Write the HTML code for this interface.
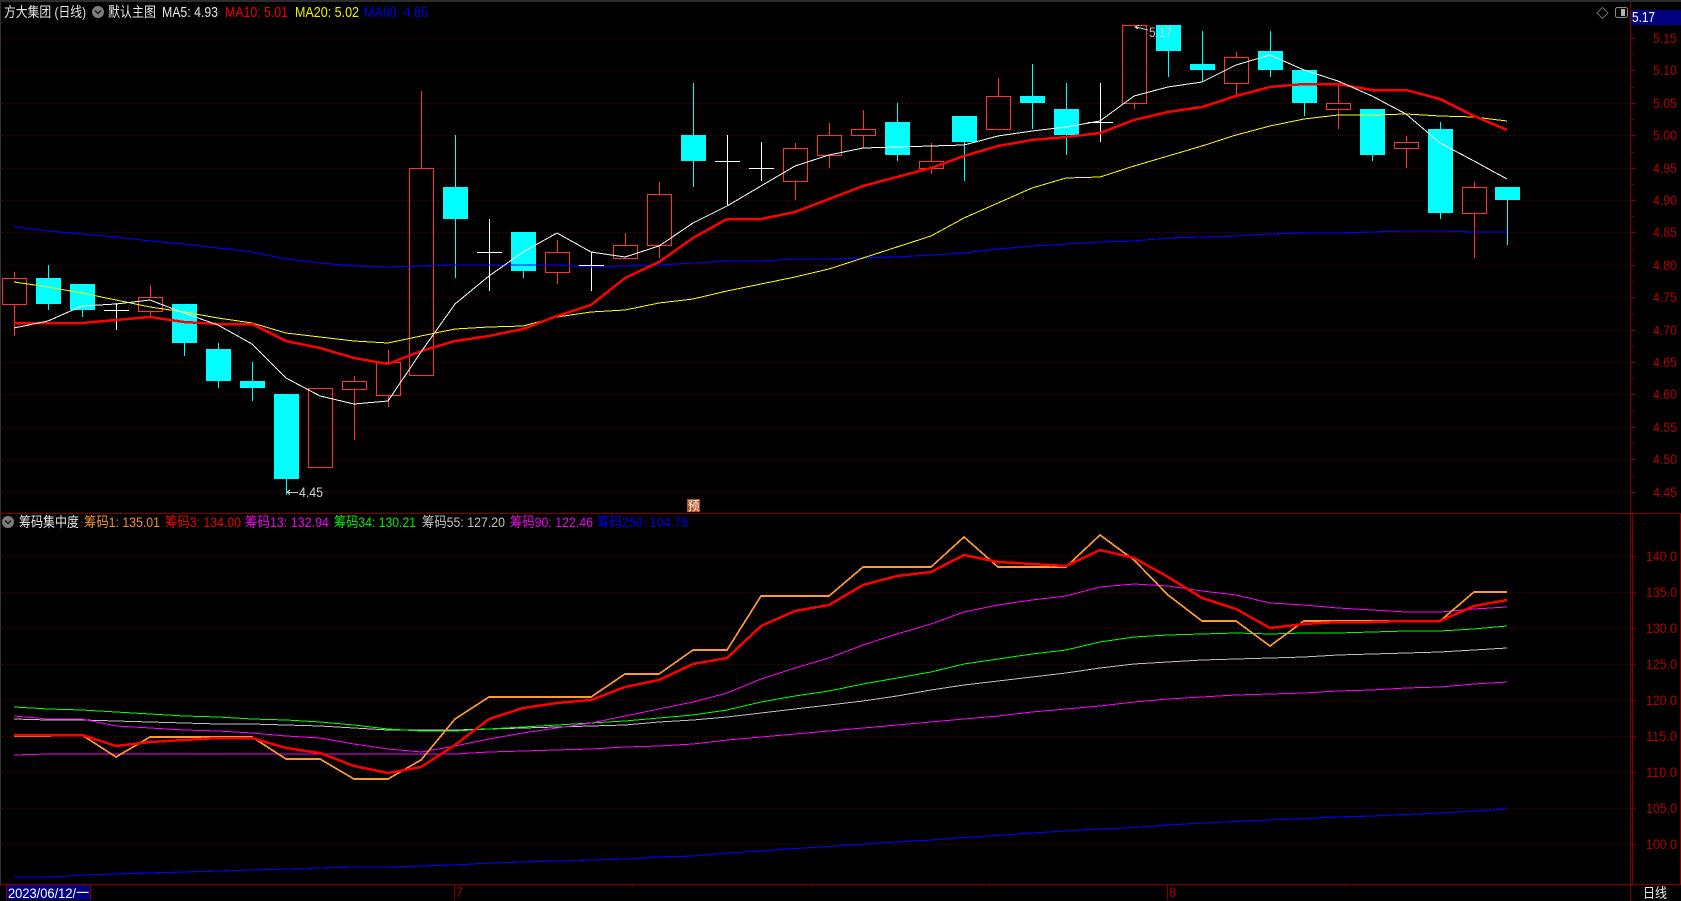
<!DOCTYPE html>
<html lang="zh-CN"><head><meta charset="utf-8"><title>方大集团 (日线)</title>
<style>html,body{margin:0;padding:0;background:#000;width:1681px;height:901px;overflow:hidden}svg{display:block}text{font-family:"Liberation Sans","Noto Sans CJK SC",sans-serif;font-size:14px}</style></head>
<body>
<svg width="1681" height="901" viewBox="0 0 1681 901" xmlns="http://www.w3.org/2000/svg">
<rect width="1681" height="901" fill="#000"/>
<rect width="1681" height="2" fill="#2d2d2d"/>
<rect width="1" height="884" fill="#333"/>
<g stroke="#7a0000" stroke-dasharray="1 3" shape-rendering="crispEdges" fill="none">
<path d="M2 38.5H1630M2 70.5H1630M2 103.5H1630M2 135.5H1630M2 168.5H1630M2 200.5H1630M2 232.5H1630M2 265.5H1630M2 297.5H1630M2 330.5H1630M2 362.5H1630M2 394.5H1630M2 427.5H1630M2 459.5H1630M2 492.5H1630"/>
<path d="M2 556.5H1630M2 592.5H1630M2 628.5H1630M2 664.5H1630M2 700.5H1630M2 736.5H1630M2 772.5H1630M2 808.5H1630M2 844.5H1630"/>
</g>
<!-- candles -->
<g shape-rendering="crispEdges">
<path fill="none" stroke="#ff3232" d="M14.5 272V278M14.5 304V336M2.5 278.5h24v26h-24zM150.5 285V297M150.5 311V316M138.5 297.5h24v14h-24zM308.5 388.5h24v79h-24zM354.5 376V381M354.5 389V440M342.5 381.5h24v8h-24zM388.5 350V362M388.5 395V407M376.5 362.5h24v33h-24zM421.5 91V168M409.5 168.5h24v207h-24zM557.5 240V252M557.5 272V284M545.5 252.5h24v20h-24zM625.5 233V245M613.5 245.5h24v13h-24zM659.5 182V194M659.5 245V258M647.5 194.5h24v51h-24zM795.5 143V148M795.5 181V200M783.5 148.5h24v33h-24zM829.5 123V135M829.5 155V168M817.5 135.5h24v20h-24zM863.5 110V129M863.5 135V148M851.5 129.5h24v6h-24zM931.5 143V161M931.5 168V174M919.5 161.5h24v7h-24zM998.5 78V96M986.5 96.5h24v33h-24zM1134.5 103V109M1122.5 25.5h24v78h-24zM1236.5 52V57M1236.5 83V96M1224.5 57.5h24v26h-24zM1338.5 83V103M1338.5 109V129M1326.5 103.5h24v6h-24zM1406.5 136V142M1406.5 148V168M1394.5 142.5h24v6h-24zM1474.5 182V187M1474.5 213V258M1462.5 187.5h24v26h-24z"/>
<path fill="none" stroke="#00ffff" d="M48.5 265V310M82.5 284V317M184.5 304V356M218.5 343V388M252.5 362V401M286.5 394V495M455.5 135V278M523.5 232V278M693.5 83V187M897.5 103V161M964.5 116V181M1032.5 64V129M1066.5 83V155M1168.5 25V77M1202.5 31V82M1270.5 31V77M1304.5 70V116M1372.5 109V161M1440.5 122V219M1507.5 187V245"/>
<path fill="#00ffff" d="M36 278h25v26h-25zM70 284h25v26h-25zM172 304h25v39h-25zM206 349h25v32h-25zM240 381h25v7h-25zM274 394h25v85h-25zM443 187h25v32h-25zM511 232h25v39h-25zM681 135h25v26h-25zM885 122h25v33h-25zM952 116h25v26h-25zM1020 96h25v7h-25zM1054 109h25v26h-25zM1156 25h25v26h-25zM1190 64h25v6h-25zM1258 51h25v19h-25zM1292 70h25v33h-25zM1360 109h25v46h-25zM1428 129h25v84h-25zM1495 187h25v13h-25z"/>
<path fill="none" stroke="#fff" d="M116.5 303V330M104 310.5H129M489.5 219V291M477 252.5H502M591.5 252V291M579 265.5H604M727.5 135V205M715 161.5H740M761.5 142V181M749 168.5H774M1100.5 83V142M1088 122.5H1113"/>
</g>
<!-- MA lines -->
<g fill="none" shape-rendering="crispEdges" stroke-linejoin="round">
<polyline stroke="#0000ff" stroke-width="1.1" points="14,227 48,231 82,234 116,237 150,241 184,244 218,248 252,252 286,259 320,263 354,266 388,267 421,266 455,265 489,265 523,265 557,265 591,267 625,266 659,265 693,263 727,261 761,261 795,259 829,259 863,258 897,257 931,255 964,253 998,249 1032,246 1066,244 1100,242 1134,241 1168,238 1202,237 1236,236 1270,234 1304,233 1338,233 1372,232 1406,231 1440,231 1474,232 1507,232"/>
<polyline stroke="#ffff00" stroke-width="1" points="14,282 48,287 82,293 116,300 150,307 184,312 218,318 252,323 286,333 320,337 354,341 388,343 421,336 455,329 489,327 523,326 557,317 591,312 625,310 659,303 693,299 727,291 761,284 795,277 829,269 863,258 897,247 931,236 964,218 998,203 1032,188 1066,178 1100,177 1134,166 1168,156 1202,146 1236,135 1270,126 1304,119 1338,115 1372,115 1406,114 1440,116 1474,117 1507,121"/>
<polyline stroke="#ff0000" stroke-width="2.5" points="14,323 48,323 82,323 116,320 150,317 184,322 218,324 252,324 286,341 320,348 354,358 388,364 421,351 455,341 489,336 523,329 557,316 591,305 625,278 659,262 693,238 727,219 761,219 795,212 829,199 863,186 897,177 931,168 964,156 998,146 1032,140 1066,137 1100,133 1134,120 1168,112 1202,107 1236,96 1270,87 1304,84 1338,84 1372,90 1406,90 1440,99 1474,116 1507,130"/>
<polyline stroke="#ffffff" stroke-width="1" points="14,328 48,321 82,306 116,304 150,300 184,313 218,325 252,344 286,378 320,396 354,404 388,401 421,352 455,304 489,276 523,252 557,233 591,252 625,257 659,246 693,223 727,206 761,186 795,166 829,155 863,148 897,147 931,146 964,145 998,136 1032,131 1066,127 1100,121 1134,96 1168,87 1202,82 1236,65 1270,55 1304,70 1338,81 1372,96 1406,114 1440,143 1474,161 1507,179"/>
<!-- indicator lines -->
<polyline stroke="#0000ff" stroke-width="1.1" points="14,877 48,877 82,875 116,874 150,873 184,872 218,871 252,870 286,869 320,868 354,867 388,867 421,866 455,865 489,863 523,862 557,861 591,860 625,859 659,857 693,856 727,853 761,851 795,848.5 829,846.5 863,844 897,842 931,840 964,837.5 998,835.5 1032,833 1066,831 1100,829 1134,827.5 1168,825 1202,823 1236,821.5 1270,820 1304,818.5 1338,817 1372,816 1406,814.5 1440,813 1474,811 1507,809"/>
<polyline stroke="#ff00ff" stroke-width="1" points="14,755 48,754 82,754 116,754 150,754 184,754 218,754 252,754 286,754 320,754 354,754 388,754 421,754 455,754 489,752 523,751 557,750 591,749 625,747 659,746 693,744 727,740 761,737 795,734 829,731 863,728 897,725 931,722 964,719 998,716 1032,712 1066,709 1100,706 1134,702 1168,699 1202,697 1236,695 1270,694 1304,693 1338,691 1372,690 1406,688 1440,687 1474,684 1507,682"/>
<polyline stroke="#c0c0c0" stroke-width="1" points="14,719 48,720 82,720 116,721 150,722 184,723 218,724 252,724 286,725 320,726 354,728 388,730 421,730 455,730 489,729 523,728 557,727 591,726 625,725 659,722 693,720 727,717 761,713 795,709 829,705 863,701 897,696 931,690 964,685 998,681 1032,677 1066,673 1100,668 1134,664 1168,662 1202,660 1236,659 1270,658 1304,657 1338,655 1372,654 1406,653 1440,652 1474,650 1507,648"/>
<polyline stroke="#00ff00" stroke-width="1" points="14,707 48,709 82,710 116,712 150,714 184,716 218,717 252,719 286,720 320,722 354,725 388,729 421,731 455,731 489,729 523,727 557,725 591,723 625,721 659,718 693,715 727,710 761,702 795,696 829,691 863,684 897,678 931,672 964,664 998,659 1032,654 1066,650 1100,642 1134,637 1168,635 1202,634 1236,633 1270,634 1304,633 1338,633 1372,632 1406,631 1440,631 1474,629 1507,626"/>
<polyline stroke="#ff00ff" stroke-width="1" points="14,716 48,719 82,719 116,726 150,728 184,730 218,731 252,733 286,736 320,738 354,744 388,749 421,752 455,746 489,739 523,733 557,728 591,723 625,716 659,709 693,702 727,693 761,679 795,668 829,658 863,645 897,634 931,624 964,612 998,605 1032,600 1066,596 1100,587 1134,584 1168,586 1202,591 1236,595 1270,603 1304,605 1338,608 1372,610 1406,612 1440,612 1474,609 1507,607"/>
<polyline stroke="#ff9933" stroke-width="1.7" points="14,736 48,736 82,735 116,757 150,737 184,737 218,737 252,737 286,759 320,759 354,779 388,779 421,760 455,719 489,697 523,697 557,697 591,697 625,674 659,674 693,650 727,650 761,596 795,596 829,596 863,567 897,567 931,567 964,537 998,567 1032,567 1066,567 1100,535 1134,560 1168,595 1202,621 1236,621 1270,646 1304,621 1338,621 1372,621 1406,621 1440,621 1474,592 1507,592"/>
<polyline stroke="#ff0000" stroke-width="2.5" points="14,735 48,735 82,735 116,746 150,742 184,740 218,738 252,738 286,748 320,753 354,766 388,773 421,767 455,745 489,719 523,708 557,703 591,700 625,687 659,680 693,664 727,658 761,626 795,611 829,605 863,585 897,576 931,572 964,555 998,562 1032,564 1066,566 1100,550 1134,558 1168,577 1202,598 1236,609 1270,628 1304,624 1338,622 1372,622 1406,621 1440,621 1474,606 1507,600"/>
</g>
<!-- high / low marks -->
<g fill="none" stroke="#c8c8c8" shape-rendering="crispEdges">
<path d="M1148 30L1136 27M1139 25L1135 27L1138 29"/>
<path d="M298 492.5H287M290 490L287 492L290 495"/>
</g>
<text x="1149" y="37" fill="#c8c8c8" textLength="23" lengthAdjust="spacingAndGlyphs">5.17</text>
<text x="299" y="497" fill="#c8d0d8" textLength="24" lengthAdjust="spacingAndGlyphs">4.45</text>
<!-- frame / axes -->
<g stroke="#800000" fill="none" shape-rendering="crispEdges">
<path d="M1630.5 2V901M0 513.5H1681M0 884.5H1681"/>
<rect x="1632.5" y="513.5" width="48" height="371"/>
<path d="M1631 38.5h5M1631 54.5h3M1631 70.5h5M1631 87.5h3M1631 103.5h5M1631 119.5h3M1631 135.5h5M1631 152.5h3M1631 168.5h5M1631 184.5h3M1631 200.5h5M1631 216.5h3M1631 232.5h5M1631 249.5h3M1631 265.5h5M1631 281.5h3M1631 297.5h5M1631 314.5h3M1631 330.5h5M1631 346.5h3M1631 362.5h5M1631 378.5h3M1631 394.5h5M1631 411.5h3M1631 427.5h5M1631 443.5h3M1631 459.5h5M1631 476.5h3M1631 492.5h5"/>
<path d="M1631 538.5h2M1631 556.5h5M1631 574.5h2M1631 592.5h5M1631 610.5h2M1631 628.5h5M1631 646.5h2M1631 664.5h5M1631 682.5h2M1631 700.5h5M1631 718.5h2M1631 736.5h5M1631 754.5h2M1631 772.5h5M1631 790.5h2M1631 808.5h5M1631 826.5h2M1631 844.5h5M1631 862.5h2"/>
<path d="M454.5 884V900M1167.5 884V900M632.5 884V887M811.5 884V887M989.5 884V887M1345.5 884V887"/>
</g>
<!-- price labels -->
<g fill="#b00000" style="font-size:15px">
<text x="1653" y="43" textLength="24" lengthAdjust="spacingAndGlyphs">5.15</text>
<text x="1653" y="75" textLength="24" lengthAdjust="spacingAndGlyphs">5.10</text>
<text x="1653" y="108" textLength="24" lengthAdjust="spacingAndGlyphs">5.05</text>
<text x="1653" y="140" textLength="24" lengthAdjust="spacingAndGlyphs">5.00</text>
<text x="1653" y="173" textLength="24" lengthAdjust="spacingAndGlyphs">4.95</text>
<text x="1653" y="205" textLength="24" lengthAdjust="spacingAndGlyphs">4.90</text>
<text x="1653" y="237" textLength="24" lengthAdjust="spacingAndGlyphs">4.85</text>
<text x="1653" y="270" textLength="24" lengthAdjust="spacingAndGlyphs">4.80</text>
<text x="1653" y="302" textLength="24" lengthAdjust="spacingAndGlyphs">4.75</text>
<text x="1653" y="335" textLength="24" lengthAdjust="spacingAndGlyphs">4.70</text>
<text x="1653" y="367" textLength="24" lengthAdjust="spacingAndGlyphs">4.65</text>
<text x="1653" y="399" textLength="24" lengthAdjust="spacingAndGlyphs">4.60</text>
<text x="1653" y="432" textLength="24" lengthAdjust="spacingAndGlyphs">4.55</text>
<text x="1653" y="464" textLength="24" lengthAdjust="spacingAndGlyphs">4.50</text>
<text x="1653" y="497" textLength="24" lengthAdjust="spacingAndGlyphs">4.45</text>
<text x="1646" y="561" textLength="31" lengthAdjust="spacingAndGlyphs">140.0</text>
<text x="1646" y="597" textLength="31" lengthAdjust="spacingAndGlyphs">135.0</text>
<text x="1646" y="633" textLength="31" lengthAdjust="spacingAndGlyphs">130.0</text>
<text x="1646" y="669" textLength="31" lengthAdjust="spacingAndGlyphs">125.0</text>
<text x="1646" y="705" textLength="31" lengthAdjust="spacingAndGlyphs">120.0</text>
<text x="1646" y="741" textLength="31" lengthAdjust="spacingAndGlyphs">115.0</text>
<text x="1646" y="777" textLength="31" lengthAdjust="spacingAndGlyphs">110.0</text>
<text x="1646" y="813" textLength="31" lengthAdjust="spacingAndGlyphs">105.0</text>
<text x="1646" y="849" textLength="31" lengthAdjust="spacingAndGlyphs">100.0</text>
<text x="456" y="897" textLength="7" lengthAdjust="spacingAndGlyphs">7</text>
<text x="1169" y="897" textLength="7" lengthAdjust="spacingAndGlyphs">8</text>
</g>
<!-- top-right -->
<rect x="1631" y="10" width="50" height="15" fill="#000080"/>
<text x="1632" y="22" fill="#fff" style="font-size:15px" textLength="23" lengthAdjust="spacingAndGlyphs">5.17</text>
<path d="M1602.5 7.5L1608 13L1602.5 18.5L1597 13Z" fill="none" stroke="#6a6a6a"/>
<rect x="1615.5" y="7.5" width="12" height="10" rx="2" fill="none" stroke="#8a8a8a"/>
<rect x="1621" y="9" width="4" height="7" fill="#b0b0b0"/>
<!-- legends -->
<text x="4" y="17" fill="#e6e6e6" textLength="82" lengthAdjust="spacingAndGlyphs">方大集团 (日线)</text>
<circle cx="98" cy="12" r="6" fill="#7c7c7c"/><path d="M95 10.5L98 13.5L101 10.5" fill="none" stroke="#1c1c1c" stroke-width="1.5"/>
<text x="108" y="17" fill="#e6e6e6" textLength="48" lengthAdjust="spacingAndGlyphs">默认主图</text>
<text x="162" y="17" fill="#e6e6e6" style="font-size:15px" textLength="56" lengthAdjust="spacingAndGlyphs">MA5: 4.93</text>
<text x="225" y="17" fill="#f00000" style="font-size:15px" textLength="63" lengthAdjust="spacingAndGlyphs">MA10: 5.01</text>
<text x="295" y="17" fill="#f0f000" style="font-size:15px" textLength="64" lengthAdjust="spacingAndGlyphs">MA20: 5.02</text>
<text x="364" y="17" fill="#0000e6" style="font-size:15px" textLength="64" lengthAdjust="spacingAndGlyphs">MA60: 4.85</text>
<circle cx="8" cy="522" r="6" fill="#7c7c7c"/><path d="M5 520.5L8 523.5L11 520.5" fill="none" stroke="#1c1c1c" stroke-width="1.5"/>
<text x="19" y="527" fill="#e6e6e6" textLength="60" lengthAdjust="spacingAndGlyphs">筹码集中度</text>
<text x="84" y="527" fill="#f09030" textLength="76" lengthAdjust="spacingAndGlyphs">筹码1: 135.01</text>
<text x="165" y="527" fill="#f00000" textLength="76" lengthAdjust="spacingAndGlyphs">筹码3: 134.00</text>
<text x="245" y="527" fill="#f000f0" textLength="84" lengthAdjust="spacingAndGlyphs">筹码13: 132.94</text>
<text x="334" y="527" fill="#00f000" textLength="82" lengthAdjust="spacingAndGlyphs">筹码34: 130.21</text>
<text x="422" y="527" fill="#c0c0c0" textLength="83" lengthAdjust="spacingAndGlyphs">筹码55: 127.20</text>
<text x="510" y="527" fill="#f000f0" textLength="83" lengthAdjust="spacingAndGlyphs">筹码90: 122.46</text>
<text x="597" y="527" fill="#0000e6" textLength="91" lengthAdjust="spacingAndGlyphs">筹码250: 104.79</text>
<!-- 预 badge -->
<rect x="687" y="499" width="13" height="13" fill="#b5501f"/>
<text x="687.5" y="510" fill="#fff" style="font-size:12px" textLength="12" lengthAdjust="spacingAndGlyphs">预</text>
<!-- bottom -->
<rect x="6" y="885" width="85" height="15" fill="#000080"/>
<path d="M6.5 884V900M90.5 884V900" stroke="#800000" fill="none" shape-rendering="crispEdges"/>
<text x="8" y="898" fill="#fff" textLength="81" lengthAdjust="spacingAndGlyphs">2023/06/12/一</text>
<text x="1643" y="898" fill="#e6e6e6" textLength="24" lengthAdjust="spacingAndGlyphs">日线</text>
</svg>
</body></html>
